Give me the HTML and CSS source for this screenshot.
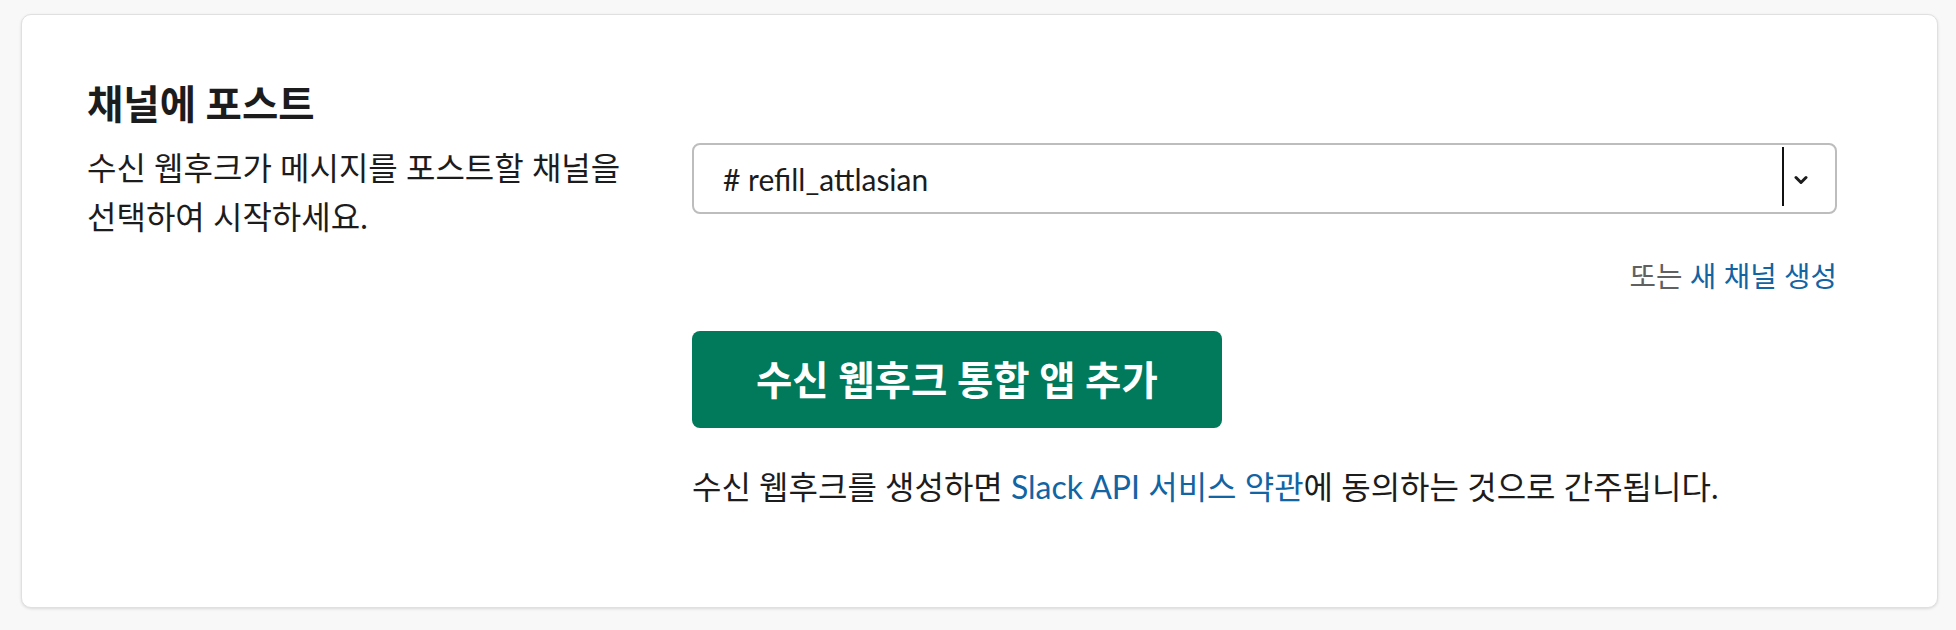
FILE: index.html
```html
<!DOCTYPE html>
<html lang="ko">
<head>
  <meta charset="utf-8">
  <meta name="viewport" content="width=device-width, initial-scale=1">
  <title>수신 웹후크</title>
  <link rel="stylesheet" href="styles.css">
</head>
<body>

  <main class="page">
    <section class="card">
      <h2 class="card-title">채널에 포스트</h2>
      <div class="card-row">
        <p class="card-desc">수신 웹후크가 메시지를 포스트할 채널을 선택하여 시작하세요.</p>

        <div class="controls">
          <div class="select">
            <span class="select-value"># refill_attlasian</span>
            <span class="select-sep"></span>
            <span class="select-arrow">
              <svg width="14" height="10" viewBox="0 0 14 10" aria-hidden="true">
                <path d="M2 2.5 L7 7.5 L12 2.5" fill="none" stroke="#1d1c1d" stroke-width="3" stroke-linecap="round" stroke-linejoin="round"/>
              </svg>
            </span>
          </div>

          <p class="alt">또는 <a href="#">새 채널 생성</a></p>

          <button class="add-btn" type="button">수신 웹후크 통합 앱 추가</button>

          <p class="terms">수신 웹후크를 생성하면 <a href="#">Slack API 서비스 약관</a>에 동의하는 것으로 간주됩니다.</p>
        </div>
      </div>
    </section>
  </main>

</body>
</html>
```

FILE: styles.css
```css
* {
  margin: 0;
  padding: 0;
  box-sizing: border-box;
}

:root {
  --text: #1d1c1d;
  --muted: #616061;
  --link: #1264a3;
  --green: #007a5a;
  --border: #bdbdbd;
  --page: #f8f8f8;
}

html {
  font-family: "Lato", "Noto Sans CJK KR", sans-serif;
  font-size: 32px;
  line-height: 49px;
  color: var(--text);
  word-break: keep-all;
}

body {
  background: var(--page);
  padding: 14px 18px 21px 21px;
}

a {
  color: var(--link);
  text-decoration: none;
}

.card {
  background: #fff;
  border: 1px solid #e0e0e0;
  border-radius: 10px;
  box-shadow: 0 1px 3px rgba(0, 0, 0, 0.12);
  padding: 65px 100px 96px 65px;
}

.card-title {
  font-size: 39.5px;
  line-height: 48px;
  font-weight: 700;
  margin-bottom: 15px;
}

.card-row {
  display: grid;
  grid-template-columns: 575px 1fr;
  column-gap: 30px;
  align-items: start;
}

.controls {
  display: flex;
  flex-direction: column;
  align-items: flex-start;
}

.select {
  display: flex;
  align-items: center;
  align-self: stretch;
  height: 71px;
  border: 2px solid var(--border);
  border-radius: 8px;
  background: #fff;
}
.select-value {
  flex: 1;
  padding-left: 29px;
  font-size: 30px;
  line-height: 40px;
}
.select-sep {
  align-self: stretch;
  width: 2px;
  margin: 2px 0 6px;
  background: #111;
}
.select-arrow {
  display: flex;
  align-items: center;
  padding: 2px 27px 0 10px;
}

.alt {
  align-self: stretch;
  text-align: right;
  font-size: 28.8px;
  line-height: 40px;
  color: var(--muted);
  margin-top: 42px;
}

.add-btn {
  margin-top: 35px;
  height: 97px;
  padding: 0 64px;
  border: 0;
  border-radius: 8px;
  background: var(--green);
  color: #fff;
  font: inherit;
  font-size: 39.5px;
  font-weight: 700;
  line-height: 48px;
  cursor: pointer;
}

.terms {
  margin-top: 34px;
}
```
